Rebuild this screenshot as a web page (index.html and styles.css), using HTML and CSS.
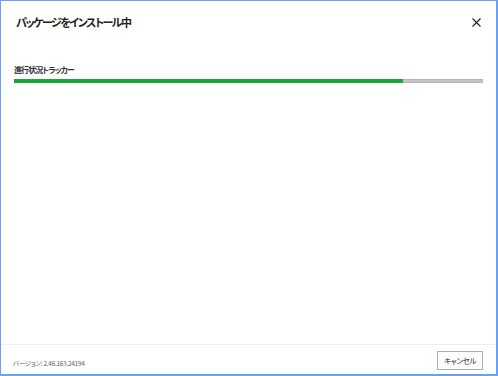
FILE: index.html
```html
<!DOCTYPE html>
<html lang="ja">
<head>
<meta charset="utf-8">
<link rel="stylesheet" href="styles.css">
</head>
<body>
<div class="window">
  <header class="header">
    <h1 class="title">パッケージをインストール中</h1>
    <button class="close" aria-label="閉じる">
      <svg width="9" height="9" viewBox="0 0 9 9"><path d="M0.5 0.5L8.5 8.5M8.5 0.5L0.5 8.5" stroke="#222" stroke-width="1.1" fill="none"/></svg>
    </button>
  </header>
  <main class="content">
    <div class="label">進行状況トラッカー</div>
    <div class="progress"><div class="fill" style="width:83.2%"></div></div>
  </main>
  <footer class="footer">
    <span class="version">バージョン: 2.46.163.24194</span>
    <button class="cancel">キャンセル</button>
  </footer>
</div>
</body>
</html>
```
FILE: styles.css
```css
html, body {
  margin: 0;
  padding: 0;
  width: 498px;
  height: 376px;
  background: #ffffff;
  overflow: hidden;
}
body {
  font-family: "Noto Sans CJK JP", "Noto Sans", sans-serif;
  font-feature-settings: "palt";
  color: #222;
}
.window {
  box-sizing: border-box;
  width: 498px;
  height: 376px;
  border: 1px solid #6a9ff2;
  border-right-width: 2px;
  border-bottom-width: 2px;
  display: flex;
  flex-direction: column;
}
.header {
  display: flex;
  align-items: center;
  justify-content: space-between;
  padding: 11px 15px 0 15px;
  height: 20px;
}
.title {
  margin: 0;
  font-size: 11px;
  line-height: 20px;
  font-weight: 700;
  color: #1e1e1e;
  letter-spacing: -1.5px;
}
.close {
  border: 0;
  background: none;
  padding: 0;
  width: 9px;
  height: 9px;
  display: flex;
}
.content {
  flex: 1;
  padding: 32px 13px 0 13px;
}
.label {
  font-size: 8px;
  line-height: 12px;
  font-weight: 700;
  color: #333;
  letter-spacing: -0.9px;
}
.progress {
  margin-top: 3px;
  height: 4px;
  box-sizing: border-box;
  background: #c6c6c6;
  border: 1px solid #b4b4b4;
  display: flex;
}
.fill {
  margin: -1px 0 -1px -1px;
  background: #1da53a;
}
.footer {
  border-top: 1px solid #eeeeee;
  display: flex;
  align-items: flex-start;
  justify-content: space-between;
  padding: 6px 13px 0 12px;
  height: 30px;
  box-sizing: border-box;
}
.version {
  font-size: 6.5px;
  line-height: 12px;
  margin-top: 6px;
  color: #666;
  letter-spacing: -0.3px;
}
.cancel {
  width: 46px;
  height: 19px;
  box-sizing: border-box;
  border: 1px solid #adadad;
  background: #fdfdfd;
  font-family: inherit;
  font-feature-settings: "palt";
  font-size: 7.5px;
  letter-spacing: -0.4px;
  color: #333;
  padding: 0;
  line-height: 17px;
}
```
